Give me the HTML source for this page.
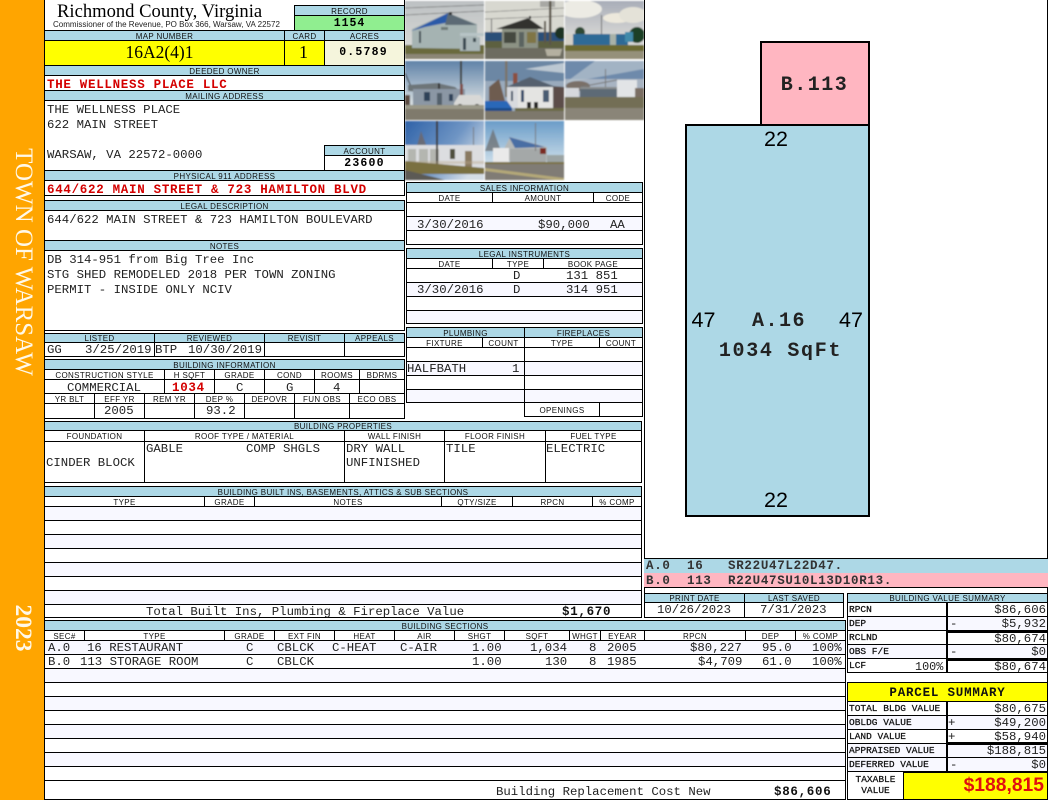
<!DOCTYPE html>
<html><head><meta charset="utf-8"><title>Richmond County, Virginia</title>
<style>
html,body{margin:0;padding:0;width:1050px;height:800px;background:#fff;overflow:hidden}
div{position:absolute;box-sizing:border-box;white-space:nowrap}
.h,.s{border:1px solid #000;font:8px/9px "Liberation Sans",sans-serif;text-align:center;letter-spacing:.35px;overflow:hidden;color:#111;padding-top:1px}
.h{background:#add8e6}
.s{background:#fff}
.c{border:1px solid #000;background:#fff}
.z{border:1px solid #000;background:#f8f8ff}
.t{height:14px;margin-top:1px;font:12.33px/14px "Liberation Mono",monospace;color:#222;white-space:pre}
.b{height:14px;margin-top:1px;font:bold 12.5px/14px "Liberation Mono",monospace;letter-spacing:.7px;color:#111;white-space:pre}
.r{color:#d40000}
.l{height:14px;font:9.5px/14px "Liberation Mono",monospace;color:#111;-webkit-text-stroke:.25px #111}
.ln{background:#000}
</style></head><body>
<div style="left:0;top:0;width:44px;height:800px;background:#ffa500"></div>
<div class="ln" style="left:44px;top:0;width:1px;height:800px"></div>
<div style="left:23px;top:262px;width:0;height:0"><div style="left:-125px;top:-14px;width:250px;height:28px;transform:rotate(90deg);text-align:center;font:25px/28px 'Liberation Serif',serif;color:#fff8e8">TOWN OF WARSAW</div></div>
<div style="left:23px;top:628px;width:0;height:0"><div style="left:-40px;top:-14px;width:80px;height:28px;transform:rotate(90deg);text-align:center;font:bold 23.5px/28px 'Liberation Serif',serif;color:#fff8e8">2023</div></div>

<div style="left:57px;top:1px;height:22px;font:18.6px/22px 'Liberation Serif',serif;color:#000">Richmond County, Virginia</div>
<div style="left:53px;top:20px;height:10px;font:8px/10px 'Liberation Sans',sans-serif;color:#222;letter-spacing:.01px">Commissioner of the Revenue, PO Box 366, Warsaw, VA 22572</div>

<div class="h" style="left:294px;top:5px;width:111px;height:11px">RECORD</div>
<div class="c" style="left:294px;top:15px;width:111px;height:16px;background:#90ee90;text-align:center;font:bold 11.5px/14px 'Liberation Mono',monospace;letter-spacing:1px;padding-top:1px">1154</div>

<div class="h" style="left:44px;top:30px;width:241px;height:11px">MAP NUMBER</div>
<div class="h" style="left:284px;top:30px;width:41px;height:11px">CARD</div>
<div class="h" style="left:324px;top:30px;width:81px;height:11px">ACRES</div>
<div class="c" style="left:44px;top:40px;width:241px;height:26px;background:#ff0;text-align:center;font:17.5px/23px 'Liberation Serif',serif;padding-right:10px">16A2(4)1</div>
<div class="c" style="left:284px;top:40px;width:41px;height:26px;background:#ff0;text-align:center;font:18px/23px 'Liberation Serif',serif;padding-right:2px">1</div>
<div class="c" style="left:324px;top:40px;width:81px;height:26px;background:#f5f5dc;text-align:center;font:bold 11.5px/23px 'Liberation Mono',monospace;letter-spacing:1.2px;padding-right:2px">0.5789</div>

<div class="h" style="left:44px;top:65px;width:361px;height:11px">DEEDED OWNER</div>
<div class="c" style="left:44px;top:75px;width:361px;height:16px"></div>
<div class="b r" style="left:47px;top:77px">THE WELLNESS PLACE LLC</div>
<div class="h" style="left:44px;top:90px;width:361px;height:11px">MAILING ADDRESS</div>
<div class="c" style="left:44px;top:100px;width:361px;height:71px"></div>
<div class="t" style="left:47px;top:102px">THE WELLNESS PLACE</div>
<div class="t" style="left:47px;top:117px">622 MAIN STREET</div>
<div class="t" style="left:47px;top:147px">WARSAW, VA 22572-0000</div>
<div class="h" style="left:324px;top:145px;width:81px;height:11px">ACCOUNT</div>
<div class="c" style="left:324px;top:155px;width:81px;height:16px;text-align:center;font:bold 11.5px/14px 'Liberation Mono',monospace;letter-spacing:1.2px;padding-top:1px">23600</div>
<div class="h" style="left:44px;top:170px;width:361px;height:11px">PHYSICAL 911 ADDRESS</div>
<div class="c" style="left:44px;top:180px;width:361px;height:16px"></div>
<div class="b r" style="left:47px;top:182px">644/622 MAIN STREET &amp; 723 HAMILTON BLVD</div>

<div class="h" style="left:44px;top:200px;width:361px;height:11px">LEGAL DESCRIPTION</div>
<div class="c" style="left:44px;top:210px;width:361px;height:31px"></div>
<div class="t" style="left:47px;top:212px">644/622 MAIN STREET &amp; 723 HAMILTON BOULEVARD</div>
<div class="h" style="left:44px;top:240px;width:361px;height:11px">NOTES</div>
<div class="c" style="left:44px;top:250px;width:361px;height:81px"></div>
<div class="t" style="left:47px;top:252px">DB 314-951 from Big Tree Inc</div>
<div class="t" style="left:47px;top:267px">STG SHED REMODELED 2018 PER TOWN ZONING</div>
<div class="t" style="left:47px;top:282px">PERMIT - INSIDE ONLY NCIV</div>

<div class="h" style="left:44px;top:333px;width:111px;height:10px;line-height:8px">LISTED</div>
<div class="h" style="left:154px;top:333px;width:111px;height:10px;line-height:8px">REVIEWED</div>
<div class="h" style="left:264px;top:333px;width:81px;height:10px;line-height:8px">REVISIT</div>
<div class="h" style="left:344px;top:333px;width:61px;height:10px;line-height:8px">APPEALS</div>
<div class="c" style="left:44px;top:342px;width:111px;height:15px"></div>
<div class="c" style="left:154px;top:342px;width:111px;height:15px"></div>
<div class="c" style="left:264px;top:342px;width:81px;height:15px"></div>
<div class="c" style="left:344px;top:342px;width:61px;height:15px"></div>
<div class="t" style="left:47px;top:342px">GG</div>
<div class="t" style="left:85px;top:342px">3/25/2019</div>
<div class="t" style="left:155px;top:342px">BTP</div>
<div class="t" style="left:188px;top:342px">10/30/2019</div>

<div class="h" style="left:44px;top:359px;width:361px;height:11px">BUILDING INFORMATION</div>
<div class="s" style="left:44px;top:369px;width:121px;height:11px">CONSTRUCTION STYLE</div>
<div class="s" style="left:164px;top:369px;width:51px;height:11px">H SQFT</div>
<div class="s" style="left:214px;top:369px;width:51px;height:11px">GRADE</div>
<div class="s" style="left:264px;top:369px;width:51px;height:11px">COND</div>
<div class="s" style="left:314px;top:369px;width:46px;height:11px">ROOMS</div>
<div class="s" style="left:359px;top:369px;width:46px;height:11px">BDRMS</div>
<div class="c" style="left:44px;top:379px;width:121px;height:15px"></div>
<div class="c" style="left:164px;top:379px;width:51px;height:15px"></div>
<div class="c" style="left:214px;top:379px;width:51px;height:15px"></div>
<div class="c" style="left:264px;top:379px;width:51px;height:15px"></div>
<div class="c" style="left:314px;top:379px;width:46px;height:15px"></div>
<div class="c" style="left:359px;top:379px;width:46px;height:15px"></div>
<div class="t" style="left:67px;top:380px">COMMERCIAL</div>
<div class="b r" style="left:172px;top:380px">1034</div>
<div class="t" style="left:236px;top:380px">C</div>
<div class="t" style="left:286px;top:380px">G</div>
<div class="t" style="left:333px;top:380px">4</div>
<div class="s" style="left:44px;top:393px;width:51px;height:11px">YR BLT</div>
<div class="s" style="left:94px;top:393px;width:51px;height:11px">EFF YR</div>
<div class="s" style="left:144px;top:393px;width:51px;height:11px">REM YR</div>
<div class="s" style="left:194px;top:393px;width:51px;height:11px">DEP %</div>
<div class="s" style="left:244px;top:393px;width:51px;height:11px">DEPOVR</div>
<div class="s" style="left:294px;top:393px;width:56px;height:11px">FUN OBS</div>
<div class="s" style="left:349px;top:393px;width:56px;height:11px">ECO OBS</div>
<div class="c" style="left:44px;top:403px;width:51px;height:16px"></div>
<div class="c" style="left:94px;top:403px;width:51px;height:16px"></div>
<div class="c" style="left:144px;top:403px;width:51px;height:16px"></div>
<div class="c" style="left:194px;top:403px;width:51px;height:16px"></div>
<div class="c" style="left:244px;top:403px;width:51px;height:16px"></div>
<div class="c" style="left:294px;top:403px;width:56px;height:16px"></div>
<div class="c" style="left:349px;top:403px;width:56px;height:16px"></div>
<div class="t" style="left:104px;top:403px">2005</div>
<div class="t" style="left:206px;top:403px">93.2</div>

<!-- photos -->
<svg style="position:absolute;left:405px;top:0" width="239" height="181" viewBox="0 0 239 181">
<defs>
<filter id="f" x="-5%" y="-5%" width="110%" height="110%"><feGaussianBlur stdDeviation="0.7"/></filter>
<linearGradient id="s1" x1="0" y1="0" x2="0" y2="1"><stop offset="0" stop-color="#bcc0c2"/><stop offset="1" stop-color="#e0e0dc"/></linearGradient>
<linearGradient id="s3" x1="0" y1="0" x2="0" y2="1"><stop offset="0" stop-color="#a8adb8"/><stop offset=".6" stop-color="#d6d6d4"/></linearGradient>
<linearGradient id="s4" x1="0" y1="0" x2="0" y2="1"><stop offset="0" stop-color="#5f82a8"/><stop offset=".7" stop-color="#d4dce0"/></linearGradient>
<linearGradient id="s7" x1="0" y1="0" x2="1" y2="0.6"><stop offset="0" stop-color="#2f62a8"/><stop offset=".6" stop-color="#6f95c4"/><stop offset="1" stop-color="#d4dde6"/></linearGradient>
<linearGradient id="s8" x1="0" y1="0" x2="0" y2="1"><stop offset="0" stop-color="#6a9cc8"/><stop offset=".8" stop-color="#d8e6ee"/></linearGradient>
</defs>
<g filter="url(#f)">
<svg x="0" y="1" width="79" height="58"><rect width="79" height="58" fill="url(#s1)"/><path d="M0 7L79 4M0 14L79 10" stroke="#444" stroke-width=".5"/><rect y="44" width="79" height="9" fill="#6b6a3c"/><rect y="53" width="79" height="5" fill="#8c8776"/><path d="M7 28L43 12L72 23L72 48L7 47Z" fill="#a5b3b2"/><path d="M6 30L43 12L70 24L40 22L20 26Z" fill="#2c5aa8"/><path d="M43 12L72 24H40Z" fill="#5c6a74"/><rect x="44" y="11" width="3" height="3" fill="#333"/><rect x="55" y="36" width="20" height="14" fill="#a9b6b8"/><rect x="55" y="32" width="24" height="3" fill="#b8c4c6"/><rect x="58" y="37" width="3" height="12" fill="#384650"/><rect x="68" y="37" width="3" height="4" fill="#3a4a50"/><rect x="36" y="26" width="7" height="3" fill="#6e7a78"/><rect x="14" y="30" width="2" height="12" fill="#3e4c52"/></svg>
<svg x="80" y="1" width="79" height="58"><rect width="79" height="58" fill="#d8d8d0"/><rect x="55" y="0" width="15" height="6" fill="#a8a8a4"/><path d="M0 11L79 7M0 18L79 15" stroke="#555" stroke-width=".5"/><rect y="31" width="79" height="9" fill="#2b4f78"/><circle cx="76" cy="32" r="6" fill="#1c3320"/><rect y="40" width="79" height="18" fill="#5d6040"/><rect y="47" width="79" height="11" fill="#6d6c60"/><path d="M11 28L43 17L59 28Z" fill="#30302e"/><rect x="44" y="15" width="2" height="3" fill="#333"/><rect x="17" y="28" width="36" height="19" fill="#8c9284"/><rect x="19" y="31" width="12" height="11" fill="#444a40"/><rect x="34" y="31" width="5" height="15" fill="#5a6460"/><rect x="42" y="31" width="9" height="11" fill="#7f7444"/><rect x="64" y="0" width="2.4" height="44" fill="#5a5448"/><rect x="59" y="20" width="2" height="22" fill="#5a5448"/><rect x="6" y="18" width="1" height="14" fill="#666"/><path d="M60 48h17l-2 7h-13z" fill="#b4b0a0"/></svg>
<svg x="160" y="1" width="79" height="58"><rect width="79" height="58" fill="url(#s3)"/><ellipse cx="15" cy="8" rx="22" ry="9" fill="#ecebe4"/><ellipse cx="52" cy="17" rx="14" ry="5" fill="#ece8dc"/><ellipse cx="68" cy="14" rx="14" ry="8" fill="#e4e2d8"/><rect x="36" y="14" width="1" height="20" fill="#666"/><circle cx="15" cy="31" r="5" fill="#2d4a34"/><circle cx="72" cy="34" r="8" fill="#1f4026"/><rect x="0" y="33" width="8" height="11" fill="#d4d0c6"/><rect x="8" y="33" width="55" height="11" fill="#2f6a96"/><rect x="45" y="33" width="6" height="11" fill="#a8b2a8"/><rect x="60" y="31" width="8" height="10" fill="#3f8aaa"/><rect y="44" width="79" height="6" fill="#6c6a32"/><rect y="50" width="79" height="8" fill="#95907a"/></svg>
<svg x="0" y="61" width="79" height="59"><rect width="79" height="59" fill="url(#s4)"/><path d="M0 12L8 30" stroke="#333"/><path d="M3 24L32 22L50 26L60 34L3 30Z" fill="#6d7478"/><rect x="8" y="28" width="52" height="17" fill="#8b97a4"/><rect x="19" y="31" width="6" height="9" fill="#2f4258"/><rect x="32" y="32" width="5" height="13" fill="#52606c"/><rect x="44" y="33" width="4" height="7" fill="#2f4258"/><rect x="33" y="22" width="2" height="6" fill="#333"/><rect x="55" y="0" width="2" height="46" fill="#3e3c36"/><rect x="55" y="23" width="3" height="14" fill="#805048"/><path d="M49 42L54 34H75L79 42V46H49Z" fill="#d8d8d6"/><circle cx="55" cy="46" r="3" fill="#222"/><circle cx="72" cy="46" r="3" fill="#222"/><rect y="34" width="5" height="12" fill="#5a4a40"/><rect y="44" width="79" height="4" fill="#9a9888"/><rect y="48" width="79" height="11" fill="#7f7a6c"/></svg>
<svg x="80" y="61" width="79" height="59"><rect width="79" height="59" fill="#9aaabc"/><rect width="79" height="20" fill="#6c87a4"/><path d="M79 12L40 8L79 2Z" fill="#bcc8d2"/><path d="M4 26L14 18L20 40L4 48Z" fill="#6e5c50"/><path d="M66 25L79 26V48H66Z" fill="#5c4e48"/><rect x="20" y="0" width="2.5" height="36" fill="#7a756a"/><rect x="28" y="12" width="4.5" height="34" fill="#8a5040"/><path d="M21 26L45 16L71 26Z" fill="#55606e"/><rect x="32" y="26" width="36" height="21" fill="#e4e4e2"/><rect x="22" y="26" width="11" height="21" fill="#d8dade"/><rect x="26" y="30" width="2" height="10" fill="#3a4c60"/><rect x="36" y="29" width="3" height="12" fill="#304a68"/><rect x="58" y="29" width="6" height="12" fill="#4a5c72"/><path d="M0 40H22L27 47V49H0Z" fill="#2a68b8"/><rect x="0" y="47" width="27" height="4" fill="#1d4b8a"/><rect x="42" y="41" width="4" height="6" fill="#222"/><rect x="49" y="41" width="4" height="6" fill="#222"/><rect y="50" width="79" height="9" fill="#7d786c"/><rect x="30" y="47" width="49" height="3" fill="#6c6a46"/></svg>
<svg x="160" y="61" width="79" height="59"><rect width="79" height="59" fill="#a8b4c2"/><rect width="79" height="18" fill="#6e8aab"/><path d="M0 22L79 8V0H30Z" fill="#b8c4ce" opacity=".7"/><rect x="40" y="8" width="1" height="24" fill="#777"/><ellipse cx="13" cy="25" rx="12" ry="5" fill="#7a7068"/><rect y="27" width="14" height="9" fill="#d6d8dc"/><rect x="15" y="28" width="39" height="9" fill="#5d6a76"/><rect x="15" y="26" width="40" height="2" fill="#8a8e8e"/><rect x="52" y="19" width="20" height="18" fill="#e2e4e6"/><path d="M52 19L15 26" stroke="#777"/><rect x="70" y="27" width="9" height="10" fill="#7a6e64"/><rect y="36" width="79" height="11" fill="#736e54"/><rect y="47" width="79" height="12" fill="#8a8578"/></svg>
<svg x="0" y="121" width="79" height="59"><rect width="79" height="59" fill="url(#s7)"/><path d="M10 32L16 10L24 32Z" fill="#6e6868" opacity=".8"/><rect x="0" y="24" width="79" height="22" fill="#dcdde0"/><rect x="3" y="28" width="8" height="15" fill="#b4b6b0"/><rect x="14" y="28" width="9" height="15" fill="#b4b6b0"/><rect x="25" y="28" width="9" height="15" fill="#b4b6b0"/><rect x="45" y="28" width="5" height="10" fill="#50503c"/><rect x="60" y="30" width="7" height="16" fill="#8a7a62"/><rect x="31" y="0" width="2" height="44" fill="#3c3a34"/><rect x="68" y="6" width="1" height="18" fill="#777"/><rect y="40" width="79" height="3" fill="#b8a88c" opacity=".4"/><path d="M0 40L79 47V53H0Z" fill="#7a7040"/><path d="M0 49L40 59H0Z" fill="#5c5a54"/></svg>
<svg x="80" y="121" width="79" height="59"><rect width="79" height="59" fill="url(#s8)"/><path d="M0 30L8 8L16 30Z" fill="#6a6a6a" opacity=".7"/><path d="M19 28L25 16L62 26V40H19Z" fill="#b4b8b8"/><path d="M24 16L60 26L30 27Z" fill="#4a6ea4"/><rect x="8" y="27" width="16" height="15" fill="#eaeaea"/><rect x="25" y="28" width="36" height="14" fill="#a4a8a8"/><rect x="55" y="27" width="6" height="6" fill="#7a2a22"/><rect x="50" y="2" width="1" height="28" fill="#777"/><rect x="62" y="34" width="17" height="8" fill="#9ca4a4"/><rect y="41" width="79" height="2" fill="#7c7242"/><rect y="43" width="79" height="16" fill="#807c74"/><path d="M0 47L79 57V59H70L0 50Z" fill="#b4a878"/></svg>
</g></svg>

<div class="ln" style="left:404px;top:0;width:1px;height:180px"></div>
<div class="ln" style="left:644px;top:0;width:1px;height:618px"></div>
<div class="ln" style="left:1047px;top:0;width:1px;height:800px"></div>

<!-- sales -->
<div class="h" style="left:406px;top:182px;width:237px;height:11px">SALES INFORMATION</div>
<div class="s" style="left:406px;top:192px;width:87px;height:11px">DATE</div>
<div class="s" style="left:492px;top:192px;width:102px;height:11px">AMOUNT</div>
<div class="s" style="left:593px;top:192px;width:50px;height:11px">CODE</div>
<div class="c" style="left:406px;top:202px;width:237px;height:15px"></div>
<div class="z" style="left:406px;top:216px;width:237px;height:15px"></div>
<div class="c" style="left:406px;top:230px;width:237px;height:15px"></div>
<div class="t" style="left:417px;top:217px">3/30/2016</div>
<div class="t" style="left:538px;top:217px">$90,000</div>
<div class="t" style="left:610px;top:217px">AA</div>

<div class="h" style="left:406px;top:248px;width:237px;height:11px">LEGAL INSTRUMENTS</div>
<div class="s" style="left:406px;top:258px;width:87px;height:11px">DATE</div>
<div class="s" style="left:492px;top:258px;width:52px;height:11px">TYPE</div>
<div class="s" style="left:543px;top:258px;width:100px;height:11px">BOOK PAGE</div>
<div class="c" style="left:406px;top:268px;width:237px;height:15px"></div>
<div class="z" style="left:406px;top:282px;width:237px;height:15px"></div>
<div class="c" style="left:406px;top:296px;width:237px;height:15px"></div>
<div class="z" style="left:406px;top:310px;width:237px;height:14px"></div>
<div class="t" style="left:513px;top:268px">D</div>
<div class="t" style="left:566px;top:268px">131 851</div>
<div class="t" style="left:417px;top:282px">3/30/2016</div>
<div class="t" style="left:513px;top:282px">D</div>
<div class="t" style="left:566px;top:282px">314 951</div>

<div class="h" style="left:406px;top:327px;width:119px;height:11px">PLUMBING</div>
<div class="h" style="left:524px;top:327px;width:119px;height:11px">FIREPLACES</div>
<div class="s" style="left:406px;top:337px;width:77px;height:11px">FIXTURE</div>
<div class="s" style="left:482px;top:337px;width:43px;height:11px">COUNT</div>
<div class="s" style="left:524px;top:337px;width:76px;height:11px">TYPE</div>
<div class="s" style="left:599px;top:337px;width:44px;height:11px">COUNT</div>
<div class="c" style="left:406px;top:347px;width:119px;height:15px"></div>
<div class="z" style="left:406px;top:361px;width:119px;height:15px"></div>
<div class="c" style="left:406px;top:375px;width:119px;height:15px"></div>
<div class="z" style="left:406px;top:389px;width:119px;height:14px"></div>
<div class="c" style="left:524px;top:347px;width:119px;height:15px"></div>
<div class="z" style="left:524px;top:361px;width:119px;height:15px"></div>
<div class="c" style="left:524px;top:375px;width:119px;height:15px"></div>
<div class="z" style="left:524px;top:389px;width:119px;height:14px"></div>
<div class="t" style="left:407px;top:361px">HALFBATH</div>
<div class="t" style="left:512px;top:361px">1</div>
<div class="s" style="left:524px;top:402px;width:76px;height:15px;line-height:13px">OPENINGS</div>
<div class="c" style="left:599px;top:402px;width:44px;height:15px"></div>

<!-- building properties -->
<div class="h" style="left:44px;top:421px;width:598px;height:10px;line-height:8px">BUILDING PROPERTIES</div>
<div class="s" style="left:44px;top:430px;width:101px;height:12px">FOUNDATION</div>
<div class="s" style="left:144px;top:430px;width:201px;height:12px">ROOF TYPE / MATERIAL</div>
<div class="s" style="left:344px;top:430px;width:101px;height:12px">WALL FINISH</div>
<div class="s" style="left:444px;top:430px;width:102px;height:12px">FLOOR FINISH</div>
<div class="s" style="left:545px;top:430px;width:97px;height:12px">FUEL TYPE</div>
<div class="c" style="left:44px;top:441px;width:101px;height:42px"></div>
<div class="c" style="left:144px;top:441px;width:201px;height:42px"></div>
<div class="c" style="left:344px;top:441px;width:101px;height:42px"></div>
<div class="c" style="left:444px;top:441px;width:102px;height:42px"></div>
<div class="c" style="left:545px;top:441px;width:97px;height:42px"></div>
<div class="t" style="left:146px;top:441px">GABLE</div>
<div class="t" style="left:246px;top:441px">COMP SHGLS</div>
<div class="t" style="left:346px;top:441px">DRY WALL</div>
<div class="t" style="left:446px;top:441px">TILE</div>
<div class="t" style="left:546px;top:441px">ELECTRIC</div>
<div class="t" style="left:46px;top:455px">CINDER BLOCK</div>
<div class="t" style="left:346px;top:455px">UNFINISHED</div>

<!-- built ins -->
<div class="h" style="left:44px;top:486px;width:598px;height:11px">BUILDING BUILT INS, BASEMENTS, ATTICS &amp; SUB SECTIONS</div>
<div class="s" style="left:44px;top:496px;width:161px;height:11px">TYPE</div>
<div class="s" style="left:204px;top:496px;width:51px;height:11px">GRADE</div>
<div class="s" style="left:254px;top:496px;width:188px;height:11px">NOTES</div>
<div class="s" style="left:441px;top:496px;width:72px;height:11px">QTY/SIZE</div>
<div class="s" style="left:512px;top:496px;width:81px;height:11px">RPCN</div>
<div class="s" style="left:592px;top:496px;width:50px;height:11px">% COMP</div>
<div class="z" style="left:44px;top:506px;width:598px;height:15px"></div>
<div class="c" style="left:44px;top:520px;width:598px;height:15px"></div>
<div class="z" style="left:44px;top:534px;width:598px;height:15px"></div>
<div class="c" style="left:44px;top:548px;width:598px;height:15px"></div>
<div class="z" style="left:44px;top:562px;width:598px;height:15px"></div>
<div class="c" style="left:44px;top:576px;width:598px;height:15px"></div>
<div class="z" style="left:44px;top:590px;width:598px;height:15px"></div>
<div class="c" style="left:44px;top:604px;width:598px;height:14px"></div>
<div class="t" style="left:146px;top:604px">Total Built Ins, Plumbing &amp; Fireplace Value</div>
<div class="b" style="left:562px;top:604px">$1,670</div>

<!-- sketch -->
<svg style="position:absolute;left:645px;top:0" width="402" height="558" viewBox="645 0 402 558">
<rect x="761" y="42" width="108" height="83" fill="#ffb6c1" stroke="#000" stroke-width="2"/>
<rect x="686" y="125" width="183" height="391" fill="#add8e6" stroke="#000" stroke-width="2"/>
<text x="814.5" y="90" text-anchor="middle" font-family="Liberation Mono" font-weight="bold" font-size="20" letter-spacing="1.5" fill="#222">B.113</text>
<text x="776" y="146" text-anchor="middle" font-family="Liberation Sans" font-size="21.5" fill="#000">22</text>
<text x="776" y="507" text-anchor="middle" font-family="Liberation Sans" font-size="21.5" fill="#000">22</text>
<text x="703.5" y="327" text-anchor="middle" font-family="Liberation Sans" font-size="21.5" fill="#000">47</text>
<text x="851" y="327" text-anchor="middle" font-family="Liberation Sans" font-size="21.5" fill="#000">47</text>
<text x="779" y="326" text-anchor="middle" font-family="Liberation Mono" font-weight="bold" font-size="20" letter-spacing="1.5" fill="#222">A.16</text>
<text x="780.5" y="356" text-anchor="middle" font-family="Liberation Mono" font-weight="bold" font-size="20" letter-spacing="1.7" fill="#222">1034 SqFt</text>
</svg>
<div style="left:644px;top:558px;width:404px;height:15px;background:#add8e6;border-top:1px solid #000"></div>
<div style="left:644px;top:573px;width:404px;height:15px;background:#ffb6c1;border-bottom:1px solid #000"></div>
<div class="b" style="left:646px;top:558px;color:#333">A.0  16   SR22U47L22D47.</div>
<div class="b" style="left:646px;top:573px;color:#333">B.0  113  R22U47SU10L13D10R13.</div>

<!-- dates -->
<div class="h" style="left:644px;top:593px;width:101px;height:10px;line-height:8px">PRINT DATE</div>
<div class="h" style="left:744px;top:593px;width:100px;height:10px;line-height:8px">LAST SAVED</div>
<div class="c" style="left:644px;top:602px;width:101px;height:16px"></div>
<div class="c" style="left:744px;top:602px;width:100px;height:16px"></div>
<div class="t" style="left:657px;top:602px">10/26/2023</div>
<div class="t" style="left:760px;top:602px">7/31/2023</div>

<!-- value summary -->
<div class="h" style="left:847px;top:593px;width:201px;height:10px;line-height:8px">BUILDING VALUE SUMMARY</div>
<div class="c" style="left:847px;top:602px;width:100px;height:15px"></div>
<div class="z" style="left:847px;top:616px;width:100px;height:15px"></div>
<div class="c" style="left:847px;top:630px;width:100px;height:15px"></div>
<div class="z" style="left:847px;top:644px;width:100px;height:15px"></div>
<div class="c" style="left:847px;top:658px;width:100px;height:15px"></div>
<div class="c" style="left:946px;top:602px;width:102px;height:15px;border-left-width:2px"></div>
<div class="z" style="left:946px;top:616px;width:102px;height:15px;border-left-width:2px"></div>
<div class="c" style="left:946px;top:630px;width:102px;height:15px;border-left-width:2px;border-top-width:3px"></div>
<div class="z" style="left:946px;top:644px;width:102px;height:15px;border-left-width:2px"></div>
<div class="c" style="left:946px;top:658px;width:102px;height:15px;border-left-width:2px;border-top-width:3px"></div>
<div class="l" style="left:849px;top:603px">RPCN</div>
<div class="l" style="left:849px;top:617px">DEP</div>
<div class="l" style="left:849px;top:631px">RCLND</div>
<div class="l" style="left:849px;top:645px">OBS F/E</div>
<div class="l" style="left:849px;top:659px">LCF</div>
<div class="t" style="left:915px;top:659px;font-size:11.8px">100%</div>
<div class="t" style="right:4px;top:602px">$86,606</div>
<div class="t" style="left:950px;top:616px">-</div><div class="t" style="right:4px;top:616px">$5,932</div>
<div class="t" style="right:4px;top:631px">$80,674</div>
<div class="t" style="left:950px;top:644px">-</div><div class="t" style="right:4px;top:644px">$0</div>
<div class="t" style="right:4px;top:659px">$80,674</div>

<!-- parcel summary -->
<div class="c" style="left:847px;top:682px;width:201px;height:20px;background:#ff0;text-align:center;font:bold 12.5px/18px 'Liberation Mono',monospace;letter-spacing:.8px;color:#111;padding-top:1px">PARCEL SUMMARY</div>
<div class="c" style="left:847px;top:701px;width:100px;height:15px"></div>
<div class="z" style="left:847px;top:715px;width:100px;height:15px"></div>
<div class="c" style="left:847px;top:729px;width:100px;height:15px"></div>
<div class="z" style="left:847px;top:743px;width:100px;height:15px"></div>
<div class="z" style="left:847px;top:757px;width:100px;height:15px"></div>
<div class="c" style="left:946px;top:701px;width:102px;height:15px;border-left-width:2px"></div>
<div class="z" style="left:946px;top:715px;width:102px;height:15px;border-left-width:2px"></div>
<div class="c" style="left:946px;top:729px;width:102px;height:15px;border-left-width:2px"></div>
<div class="z" style="left:946px;top:742px;width:102px;height:16px;border-left-width:2px;border-top-width:3px"></div>
<div class="z" style="left:946px;top:757px;width:102px;height:15px;border-left-width:2px"></div>
<div class="l" style="left:849px;top:702px">TOTAL BLDG VALUE</div>
<div class="l" style="left:849px;top:716px">OBLDG VALUE</div>
<div class="l" style="left:849px;top:730px">LAND VALUE</div>
<div class="l" style="left:849px;top:744px">APPRAISED VALUE</div>
<div class="l" style="left:849px;top:758px">DEFERRED VALUE</div>
<div class="t" style="right:4px;top:701px">$80,675</div>
<div class="t" style="left:948px;top:715px">+</div><div class="t" style="right:4px;top:715px">$49,200</div>
<div class="t" style="left:948px;top:729px">+</div><div class="t" style="right:4px;top:729px">$58,940</div>
<div class="t" style="right:4px;top:743px">$188,815</div>
<div class="t" style="left:950px;top:757px">-</div><div class="t" style="right:4px;top:757px">$0</div>
<div class="c" style="left:847px;top:771px;width:57px;height:29px;text-align:center;font:9.5px/11px 'Liberation Mono',monospace;-webkit-text-stroke:.25px #111;padding-top:2px;color:#111">TAXABLE<br>VALUE</div>
<div class="c" style="left:903px;top:771px;width:145px;height:29px;background:#ff0;border-top-width:2px;text-align:right;padding-right:3px;font:bold 19.3px/25px 'Liberation Sans',sans-serif;color:#e01010">$188,815</div>

<!-- building sections -->
<div class="h" style="left:44px;top:620px;width:802px;height:11px">BUILDING SECTIONS</div>
<div class="s" style="left:44px;top:630px;width:41px;height:11px">SEC#</div>
<div class="s" style="left:84px;top:630px;width:141px;height:11px">TYPE</div>
<div class="s" style="left:224px;top:630px;width:51px;height:11px">GRADE</div>
<div class="s" style="left:274px;top:630px;width:61px;height:11px">EXT FIN</div>
<div class="s" style="left:334px;top:630px;width:61px;height:11px">HEAT</div>
<div class="s" style="left:394px;top:630px;width:61px;height:11px">AIR</div>
<div class="s" style="left:454px;top:630px;width:51px;height:11px">SHGT</div>
<div class="s" style="left:504px;top:630px;width:66px;height:11px">SQFT</div>
<div class="s" style="left:569px;top:630px;width:32px;height:11px">WHGT</div>
<div class="s" style="left:600px;top:630px;width:45px;height:11px">EYEAR</div>
<div class="s" style="left:644px;top:630px;width:102px;height:11px">RPCN</div>
<div class="s" style="left:745px;top:630px;width:51px;height:11px">DEP</div>
<div class="s" style="left:795px;top:630px;width:51px;height:11px">% COMP</div>
<div class="z" style="left:44px;top:640px;width:802px;height:15px"></div>
<div class="c" style="left:44px;top:654px;width:802px;height:15px"></div>
<div class="z" style="left:44px;top:668px;width:802px;height:15px"></div>
<div class="c" style="left:44px;top:682px;width:802px;height:15px"></div>
<div class="z" style="left:44px;top:696px;width:802px;height:15px"></div>
<div class="c" style="left:44px;top:710px;width:802px;height:15px"></div>
<div class="z" style="left:44px;top:724px;width:802px;height:15px"></div>
<div class="c" style="left:44px;top:738px;width:802px;height:15px"></div>
<div class="z" style="left:44px;top:752px;width:802px;height:15px"></div>
<div class="c" style="left:44px;top:766px;width:802px;height:15px"></div>
<div class="c" style="left:44px;top:780px;width:802px;height:20px"></div>
<div class="t" style="left:48px;top:640px">A.0</div>
<div class="t" style="left:87px;top:640px">16 RESTAURANT</div>
<div class="t" style="left:246px;top:640px">C</div>
<div class="t" style="left:277px;top:640px">CBLCK</div>
<div class="t" style="left:332px;top:640px">C-HEAT</div>
<div class="t" style="left:400px;top:640px">C-AIR</div>
<div class="t" style="left:472px;top:640px">1.00</div>
<div class="t" style="left:530px;top:640px">1,034</div>
<div class="t" style="left:589px;top:640px">8</div>
<div class="t" style="left:607px;top:640px">2005</div>
<div class="t" style="left:690px;top:640px">$80,227</div>
<div class="t" style="left:762px;top:640px">95.0</div>
<div class="t" style="left:812px;top:640px">100%</div>
<div class="t" style="left:48px;top:654px">B.0</div>
<div class="t" style="left:80px;top:654px">113 STORAGE ROOM</div>
<div class="t" style="left:246px;top:654px">C</div>
<div class="t" style="left:277px;top:654px">CBLCK</div>
<div class="t" style="left:472px;top:654px">1.00</div>
<div class="t" style="left:545px;top:654px">130</div>
<div class="t" style="left:589px;top:654px">8</div>
<div class="t" style="left:607px;top:654px">1985</div>
<div class="t" style="left:698px;top:654px">$4,709</div>
<div class="t" style="left:762px;top:654px">61.0</div>
<div class="t" style="left:812px;top:654px">100%</div>
<div class="t" style="left:496px;top:784px">Building Replacement Cost New</div>
<div class="b" style="left:774px;top:784px">$86,606</div>
</body></html>
